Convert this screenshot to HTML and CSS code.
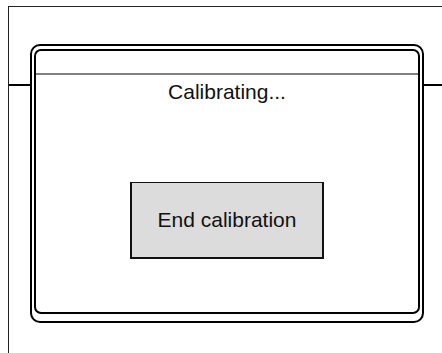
FILE: index.html
```html
<!DOCTYPE html>
<html lang="en">
<head>
    <meta charset="UTF-8">
    <meta name="viewport" content="width=device-width, initial-scale=1.0">
    <title>Calibration</title>
    <link rel="stylesheet" href="styles.css">
</head>
<body>
    <div class="frame">
        <div class="dialog">
            <div class="dialog-inner">
                <div class="dialog-header"></div>
                <p class="status">Calibrating...</p>
                <button class="end-btn" type="button">End calibration</button>
            </div>
        </div>
    </div>
</body>
</html>
```

FILE: styles.css
```css
body {
    margin: 0;
    background: #fff;
    font-family: "Liberation Sans", Arial, sans-serif;
    color: #111;
    overflow: hidden;
}
.frame {
    position: relative;
    box-sizing: border-box;
    margin: 6px 0 0 8px;
    height: calc(100vh - 6px);
    border-top: 1px solid #222;
    border-left: 1px solid #222;
    padding: 37px 0 0 21px;
}
/* rail line running behind the dialog */
.frame::before {
    content: "";
    position: absolute;
    left: 0;
    right: 0;
    top: 77px;
    height: 2px;
    background: #000;
}
.dialog {
    position: relative;
    z-index: 1;
    width: 386px;
    height: 270px;
    padding: 3px 2px 2px 2px;
    border: 2px solid #000;
    border-radius: 10px;
    background: #fff;
}
.dialog-inner {
    height: 261px;
    border: 2px solid #000;
    border-radius: 7px;
    display: flex;
    flex-direction: column;
    align-items: center;
}
.dialog-header {
    align-self: stretch;
    height: 22px;
    border-bottom: 2px solid #808080;
}
.status {
    margin: 5px 0 0;
    font-size: 21px;
    line-height: 24px;
}
.end-btn {
    box-sizing: border-box;
    margin-top: 78px;
    width: 194px;
    height: 77px;
    border: 2px solid #111;
    border-top-width: 1px;
    background: #dcdcdc;
    font-family: "Liberation Sans", Arial, sans-serif;
    font-size: 21px;
    color: #111;
    padding: 0;
}
```
